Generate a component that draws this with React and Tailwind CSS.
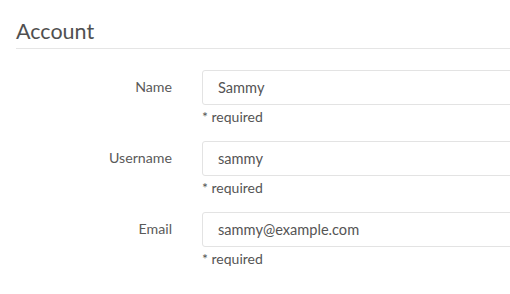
export default function App() {
  const fields = [
    { label: "Name", value: "Sammy" },
    { label: "Username", value: "sammy" },
    { label: "Email", value: "sammy@example.com" },
  ];

  return (
    <div className="w-[510px] h-[294px] overflow-hidden bg-white px-4 pt-[19px] text-[#555] font-['Lato','Open_Sans',sans-serif]">
      <h2 className="w-[520px] border-b border-[#e5e5e5] pb-[5px] text-[21.5px] leading-[24px] text-[#505050]">Account</h2>

      <div className="mt-[21px] flex flex-col gap-[15px]">
        {fields.map((f) => (
          <div key={f.label} className="flex gap-[30px]">
            <label className="w-[156px] shrink-0 h-[34px] flex items-center justify-end text-[14.2px] text-[#5a5a5a]">
              {f.label}
            </label>
            <div className="flex flex-col shrink-0">
              <div className="w-[420px] h-[35px] flex items-center rounded-[3px] border border-[#e3e3e3] px-[15px] text-[14.6px] text-[#555]">
                {f.value}
              </div>
              <span className="mt-[2px] text-[14px] leading-[19px] text-[#555]">* required</span>
            </div>
          </div>
        ))}
      </div>
    </div>
  );
}
